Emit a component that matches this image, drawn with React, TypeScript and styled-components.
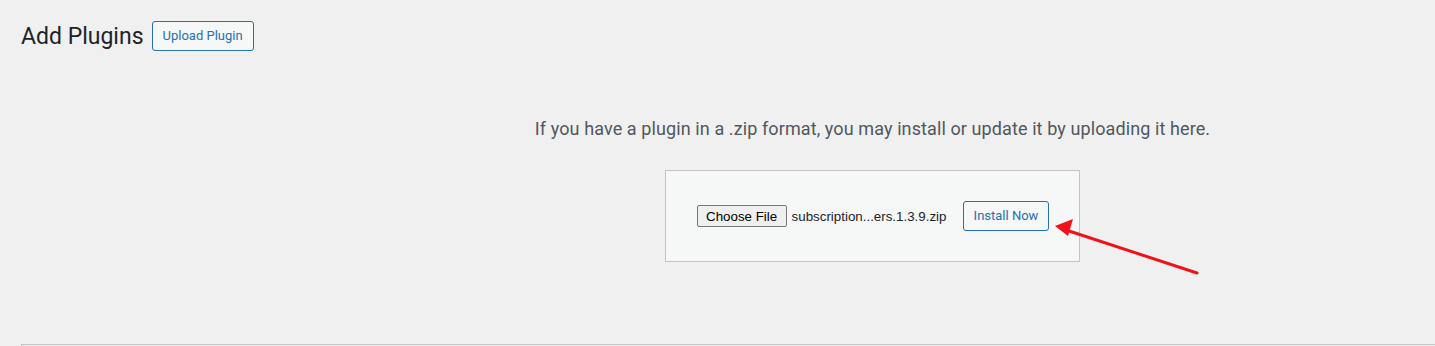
import React from "react";
import styled, { createGlobalStyle } from "styled-components";

const Global = createGlobalStyle`
  html, body { margin: 0; padding: 0; background: #f0f0f1; }
  body {
    font-family: "Segoe UI", Roboto, "Noto Sans", sans-serif;
    color: #3c434a;
    overflow: hidden;
  }
`;

const Page = styled.div`
  position: relative;
  width: 1435px;
  height: 346px;
  overflow: hidden;
`;

const Header = styled.div`
  display: flex;
  align-items: center;
  gap: 8px;
  padding: 21px 0 0 21px;
`;

const Title = styled.h1`
  margin: 0;
  font-size: 23px;
  font-weight: 400;
  line-height: 30px;
  color: #1d2327;
  position: relative;
  top: 1px;
`;

const OutlineButton = styled.button`
  box-sizing: border-box;
  font-family: inherit;
  font-size: 13px;
  line-height: 2;
  min-height: 30px;
  padding: 0 10px;
  border: 1px solid #2271b1;
  border-radius: 3px;
  background: #f6f7f7;
  color: #2271b1;
  cursor: pointer;
  white-space: nowrap;
`;

const UploadSection = styled.div`
  display: flex;
  flex-direction: column;
  align-items: center;
  padding: 64px 0 0 310px;
`;

const Help = styled.p`
  margin: 0;
  font-size: 18px;
  line-height: 28px;
  letter-spacing: 0.1px;
  color: #50575e;
  text-align: center;
`;

const UploadForm = styled.form`
  display: flex;
  align-items: center;
  margin-top: 27px;
  padding: 30px;
  background: #f6f7f7;
  border: 1px solid #c3c4c7;
`;

const FileField = styled.div`
  display: flex;
  align-items: center;
  width: 261px;
  margin-right: 6px;
  font-family: "Liberation Sans", Arial, sans-serif;
  font-size: 13.33px;
  color: #1d2327;
`;

const ChooseButton = styled.span`
  box-sizing: border-box;
  display: inline-flex;
  align-items: center;
  justify-content: center;
  width: 90px;
  height: 22px;
  margin: 0 5px 0 1px;
  background: #efefef;
  border: 1px solid #767676;
  border-radius: 2px;
  color: #000;
`;

const FileName = styled.span`
  white-space: nowrap;
  color: #1d2327;
`;

const BottomPanel = styled.div`
  position: absolute;
  left: 21px;
  right: -10px;
  top: 344px;
  height: 20px;
  border-top: 1px solid #c3c4c7;
  border-left: 1px solid #c3c4c7;
  background: #f0f0f1;
`;

const Annotation = styled.svg`
  position: absolute;
  left: 1050px;
  top: 215px;
  pointer-events: none;
`;

export default function App() {
  return (
    <Page>
      <Global />
      <Header>
        <Title>Add Plugins</Title>
        <OutlineButton>Upload Plugin</OutlineButton>
      </Header>
      <UploadSection>
        <Help>
          If you have a plugin in a .zip format, you may install or update it by uploading it here.
        </Help>
        <UploadForm onSubmit={(e) => e.preventDefault()}>
          <FileField>
            <ChooseButton>Choose File</ChooseButton>
            <FileName>subscription...ers.1.3.9.zip</FileName>
          </FileField>
          <OutlineButton type="button">Install Now</OutlineButton>
        </UploadForm>
      </UploadSection>
      <BottomPanel />
      <Annotation width="160" height="70" viewBox="1050 215 160 70">
        <line x1="1197" y1="273" x2="1066" y2="230" stroke="#f0141a" strokeWidth="3" strokeLinecap="round" />
        <polygon points="1055,226 1073,219 1068,236" fill="#f0141a" />
      </Annotation>
    </Page>
  );
}
